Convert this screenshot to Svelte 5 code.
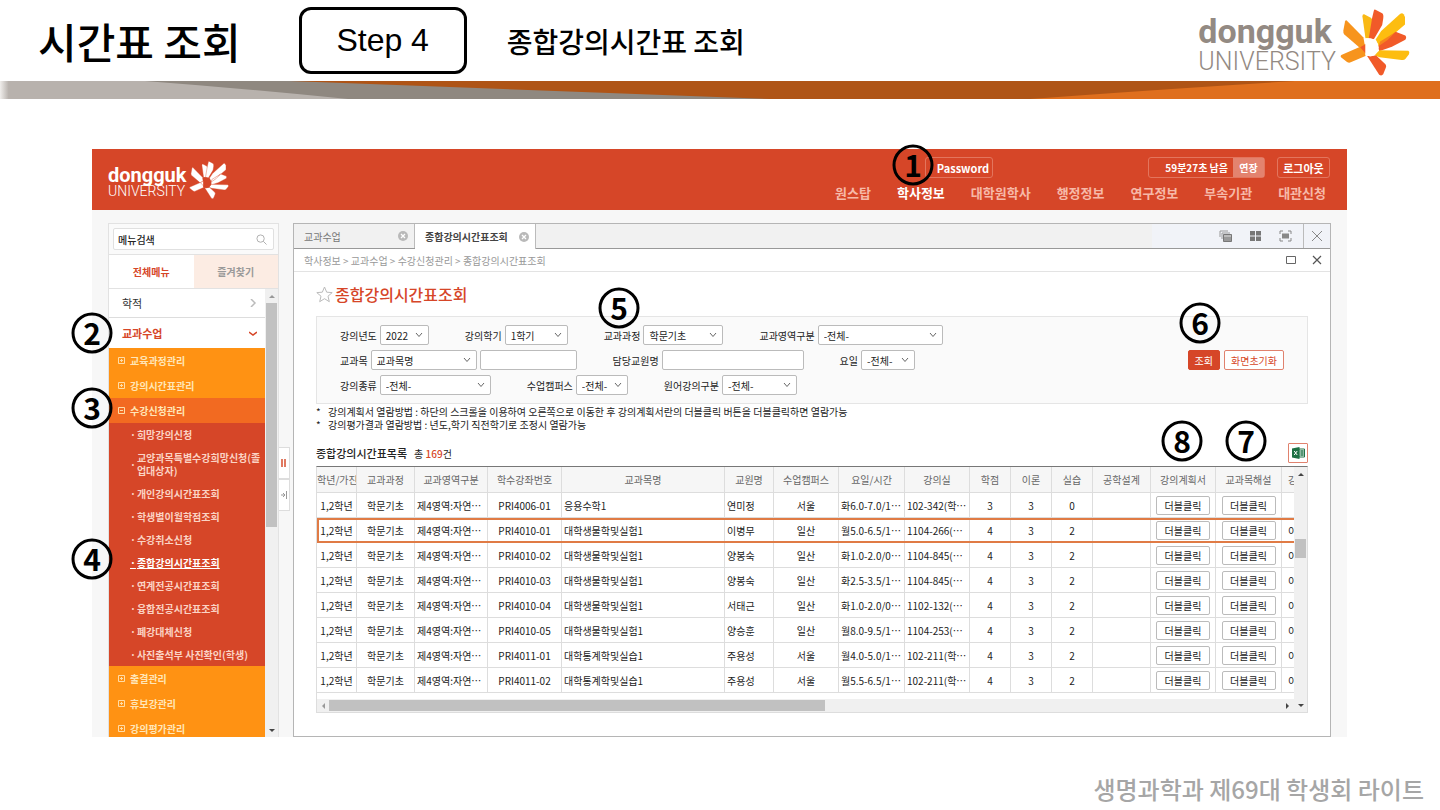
<script lang="ts">
	const nav = ['원스탑', '학사정보', '대학원학사', '행정정보', '연구정보', '부속기관', '대관신청'];

	const subMenu = [
		'희망강의신청',
		'교양과목특별수강희망신청(졸업대상자)',
		'개인강의시간표조회',
		'학생별이월학점조회',
		'수강취소신청',
		'종합강의시간표조회',
		'연계전공시간표조회',
		'융합전공시간표조회',
		'폐강대체신청',
		'사진출석부 사진확인(학생)'
	];

	const menu = [
		{ name: '교육과정관리' },
		{ name: '강의시간표관리' },
		{ name: '수강신청관리', items: subMenu },
		{ name: '출결관리' },
		{ name: '휴보강관리' },
		{ name: '강의평가관리' }
	];

	const filters = [
		[
			{ label: '강의년도', value: '2022', width: 49 },
			{ label: '강의학기', value: '1학기', width: 63 },
			{ label: '교과과정', value: '학문기초', width: 80 },
			{ label: '교과영역구분', value: '-전체-', width: 125 }
		],
		[
			{ label: '교과목', value: '교과목명', width: 106, extra: 97 },
			{ label: '담당교원명', width: 142 },
			{ label: '요일', value: '-전체-', width: 54 }
		],
		[
			{ label: '강의종류', value: '-전체-', width: 111 },
			{ label: '수업캠퍼스', value: '-전체-', width: 52 },
			{ label: '원어강의구분', value: '-전체-', width: 75 }
		]
	];

	const columns = [
		{ name: '학년/가진', width: 40 },
		{ name: '교과과정', width: 58 },
		{ name: '교과영역구분', width: 73 },
		{ name: '학수강좌번호', width: 74 },
		{ name: '교과목명' },
		{ name: '교원명', width: 49 },
		{ name: '수업캠퍼스', width: 65 },
		{ name: '요일/시간', width: 66 },
		{ name: '강의실', width: 65 },
		{ name: '학점', width: 41 },
		{ name: '이론', width: 41 },
		{ name: '실습', width: 41 },
		{ name: '공학설계', width: 58 },
		{ name: '강의계획서', width: 65 },
		{ name: '교과목해설', width: 66 },
		{ name: '강의', width: 42 }
	];

	const rows = [
		['PRI4006-01', '응용수학1', '연미정', '서울', '화6.0-7.0/1⋯', '102-342(학⋯', 3, 3, 0, ''],
		['PRI4010-01', '대학생물학및실험1', '이병무', '일산', '월5.0-6.5/1⋯', '1104-266(⋯', 4, 3, 2, '이론'],
		['PRI4010-02', '대학생물학및실험1', '양봉숙', '일산', '화1.0-2.0/0⋯', '1104-845(⋯', 4, 3, 2, '이론'],
		['PRI4010-03', '대학생물학및실험1', '양봉숙', '일산', '화2.5-3.5/1⋯', '1104-845(⋯', 4, 3, 2, '이론'],
		['PRI4010-04', '대학생물학및실험1', '서태근', '일산', '화1.0-2.0/0⋯', '1102-132(⋯', 4, 3, 2, '이론'],
		['PRI4010-05', '대학생물학및실험1', '양승훈', '일산', '월8.0-9.5/1⋯', '1104-253(⋯', 4, 3, 2, '이론'],
		['PRI4011-01', '대학통계학및실습1', '주용성', '서울', '월4.0-5.0/1⋯', '102-211(학⋯', 4, 3, 2, '이론'],
		['PRI4011-02', '대학통계학및실습1', '주용성', '서울', '월5.5-6.5/1⋯', '102-211(학⋯', 4, 3, 2, '이론']
	];

	// callouts over the window, centre points from its top left corner
	const marks = [
		{ n: 1, x: 821, y: 16 },
		{ n: 2, x: 0, y: 184 },
		{ n: 3, x: 0, y: 259 },
		{ n: 4, x: 0, y: 410 },
		{ n: 5, x: 527, y: 159 },
		{ n: 6, x: 1108, y: 174 },
		{ n: 8, x: 1090, y: 292 },
		{ n: 7, x: 1154, y: 292 }
	];

	let selected = $state(1);
</script>

{#snippet logo(mono: boolean)}
	<div class="logo" class:logo--mono={mono}>
		<div class="logo__text">
			<span class="logo__name">dongguk</span>
			<span class="logo__sub">UNIVERSITY</span>
		</div>
		<svg class="logo__flower" viewBox="602 26 209 200" aria-hidden="true">
			<path fill="#f7941d" d="M622 60 672 111 677 140 660 141 615 102Q611 98 612 90L617 63Q619 58 622 60Z" />
			<path fill="#f9b915" d="M674 42 694 52Q701 56 702 68L694 113H678L669 48Q669 41 674 42Z" />
			<path fill="#f15a29" d="M708 28 728 39Q733 43 731 55L728 74 703 116 688 113 698 52 703 31Q704 26 708 28Z" />
			<path fill="#fdbd10" d="M782 40Q788 36 792 42L796 50V72L770 95 716 138 709 116 725 92Z" />
			<path fill="#f15a29" d="M768 94 797 105Q802 110 797 118L757 139 719 152 716 136Z" />
			<path fill="#f7841d" d="M766 96 745 118 716 138 722 123Z" />
			<path fill="#fdbd10" d="M720 149 806 151Q811 153 808 161L797 175Q794 179 786 178L720 170 705 164Z" />
			<path fill="#f15a29" d="M683 166 710 165 737 190Q741 194 739 201L731 221Q726 227 719 222Z" />
			<path fill="#f7941d" d="M606 163 664 138 678 130V166L634 185Q629 188 623 184L605 170Q602 166 606 163Z" />
			<path fill="#f15a29" d="M662 140 678 131V158Z" />
			<path class="logo__core" d="M678 113H692Q717 117 717 140 714 165 692 168L678 163Z" />
		</svg>
	</div>
{/snippet}

{#snippet chevron()}
	<svg class="chevron" viewBox="0 0 8 6" aria-hidden="true"><path d="M1 1 4 4.500 7 1" /></svg>
{/snippet}

{#snippet circleClose()}
	<svg class="tab__close" viewBox="0 0 10 10" aria-hidden="true">
		<circle cx="5" cy="5" r="5" fill="#b9b9b9" />
		<path d="M3 3 7 7M7 3 3 7" stroke="#fff" stroke-width="1.300" />
	</svg>
{/snippet}

<header class="top">
	<h1>시간표 조회</h1>
	<div class="top__step">Step 4</div>
	<h2>종합강의시간표 조회</h2>
	{@render logo(false)}
</header>
<svg class="band" viewBox="0 0 1440 18" preserveAspectRatio="none" aria-hidden="true">
	<defs>
		<linearGradient id="fade" x1="0" x2="1">
			<stop offset="0" stop-color="#f0eeec" />
			<stop offset="0.006" stop-color="#b8b2ad" />
		</linearGradient>
	</defs>
	<path fill="url(#fade)" d="M0 0H1440V18H0Z" />
	<path fill="#8f8880" d="M145 0H1440V18H348Q250 8 145 0Z" />
	<path fill="#af5416" d="M290 0H1440V18H770Z" />
	<path fill="#df6f1e" d="M1295 0H1440V18H1030Q1150 9 1295 0Z" />
</svg>

<main>
	<div class="window">
		<header class="bar">
			{@render logo(true)}
			<div class="bar__right">
				<div class="bar__user">
					<button class="bar__password">Password</button>
					<div class="bar__timer"><span>59분27초 남음</span><button>연장</button></div>
					<button class="bar__logout">로그아웃</button>
				</div>
				<nav>
					{#each nav as item}
						<a href="#top" class:active={item === '학사정보'}>{item}</a>
					{/each}
				</nav>
			</div>
		</header>

		<div class="body">
			<aside>
				<div class="search">
					<input type="text" value="메뉴검색" aria-label="메뉴검색" />
					<svg viewBox="0 0 12 12" aria-hidden="true"><circle cx="5" cy="5" r="4" /><path d="M8 8 11.500 11.500" /></svg>
				</div>
				<div class="switch">
					<button class="active">전체메뉴</button>
					<button>즐겨찾기</button>
				</div>
				<div class="menu">
					<div class="menu__list">
						<a class="menu__top" href="#a">학적 <svg viewBox="0 0 8 8" aria-hidden="true"><path d="M2 0 6 4 2 8" /></svg></a>
						<a class="menu__top menu__top--open" href="#b">교과수업 <svg viewBox="0 0 8 8" aria-hidden="true"><path d="M0 3 4 6 8 3" /></svg></a>
						{#each menu as group}
							<a class="menu__group" class:open={group.items} href="#c">
								<svg viewBox="0 0 7 7" aria-hidden="true">
									<path d="M0.500 0.500H6.500V6.500H0.500Z" />
									<path d={group.items ? 'M2 3.500H5' : 'M2 3.500H5M3.500 2V5'} />
								</svg>
								{group.name}
							</a>
							{#if group.items}
								<ul>
									{#each group.items as item}
										<li><a href="#d" class:current={item === '종합강의시간표조회'}><i>·</i><span>{item}</span></a></li>
									{/each}
								</ul>
							{/if}
						{/each}
					</div>
					<div class="vscroll">
						<i class="arrow arrow--up dim"></i>
						<div class="menu__thumb"></div>
						<i class="arrow arrow--down"></i>
					</div>
				</div>
			</aside>

			<div class="handle">
				<button aria-label="메뉴 고정"><svg viewBox="0 0 6 8"><path d="M1 0V8M4 0V8" stroke="#e07a62" stroke-width="2" /></svg></button>
				<button aria-label="메뉴 접기"><svg viewBox="0 0 6 8"><path d="M0 4H4M2 2 4 4 2 6M5.500 0V8" fill="none" stroke="#999" /></svg></button>
			</div>

			<section class="panel">
				<div class="tabs">
					<button class="tab">교과수업 {@render circleClose()}</button>
					<button class="tab tab--active">종합강의시간표조회 {@render circleClose()}</button>
					<div class="tools">
						<svg viewBox="0 0 13 12" aria-hidden="true"><path d="M1 7V1H9M3 9V3H11" fill="none" stroke="#999" /><path d="M4.500 4.500H12.500V11.500H4.500Z" fill="#999" stroke="#777" /><path d="M5 6H12" stroke="#ddd" /></svg>
						<svg viewBox="0 0 13 12" aria-hidden="true"><path d="M1 1H6V5.500H1ZM7 1H12V5.500H7ZM1 6.500H6V11H1ZM7 6.500H12V11H7Z" fill="#777" /></svg>
						<svg viewBox="0 0 13 12" aria-hidden="true"><path d="M3 3.500H10V8.500H3Z" fill="#888" /><path d="M1 4V1H4M9 1H12V4M12 8V11H9M4 11H1V8" fill="none" stroke="#888" /></svg>
					</div>
					<button class="tabs__close" aria-label="모두 닫기"><svg viewBox="0 0 12 12"><path d="M1 1 11 11M11 1 1 11" stroke="#888" /></svg></button>
				</div>
				<div class="crumbs">
					<span>학사정보 &gt; 교과수업 &gt; 수강신청관리 &gt; 종합강의시간표조회</span>
					<button aria-label="최대화"><svg viewBox="0 0 10 10"><path d="M0.500 1.500H9.500V8.500H0.500Z" fill="none" stroke="#666" /></svg></button>
					<button aria-label="닫기"><svg viewBox="0 0 10 10"><path d="M1 1 9 9M9 1 1 9" stroke="#555" stroke-width="1.200" /></svg></button>
				</div>

				<div class="content">
					<h3>
						<svg viewBox="0 0 17 17" aria-hidden="true"><path d="M8.500 1 10.700 6.200 16.200 6.600 12 10.200 13.300 15.700 8.500 12.700 3.700 15.700 5 10.200 0.800 6.600 6.300 6.200Z" /></svg>
						종합강의시간표조회
					</h3>

					<form class="filter" onsubmit={(e) => e.preventDefault()}>
						<div class="filter__rows">
							{#each filters as line}
								<div class="filter__row">
									{#each line as field}
										<div class="field">
											<label for={field.label}>{field.label}</label>
											{#if field.value}
												<span class="select" style="width: {field.width}px">
													<select id={field.label}><option>{field.value}</option></select>
													{@render chevron()}
												</span>
											{:else}
												<input id={field.label} type="text" style="width: {field.width}px" />
											{/if}
											{#if field.extra}
												<input type="text" aria-label="교과목 검색어" style="width: {field.extra}px" />
											{/if}
										</div>
									{/each}
								</div>
							{/each}
						</div>
						<div class="filter__buttons">
							<button class="primary">조회</button>
							<button type="reset">화면초기화</button>
						</div>
					</form>

					<ul class="notes">
						<li><i>*</i>강의계획서 열람방법 : 하단의 스크롤을 이용하여 오른쪽으로 이동한 후 강의계획서란의 더블클릭 버튼을 더블클릭하면 열람가능</li>
						<li><i>*</i>강의평가결과 열람방법 : 년도,학기 직전학기로 조정시 열람가능</li>
					</ul>

					<div class="list-head">
						<h4>종합강의시간표목록</h4>
						<span>총 <b>169</b>건</span>
						<button aria-label="엑셀 다운로드">
							<svg viewBox="0 0 13 12"><path d="M7 2H12.500V10H7Z" fill="#fff" stroke="#217346" /><path d="M8 4H12M8 6H12M8 8H12M10 3V9" stroke="#217346" /><path d="M0 1.500 7.500 0V12L0 10.500Z" fill="#1d7044" /><path d="M2.200 4 5.200 8M5.200 4 2.200 8" stroke="#fff" /></svg>
						</button>
					</div>

					<div class="grid">
						<div class="grid__main">
							<table>
								<colgroup>
									{#each columns as col}
										<col style={col.width ? `width: ${col.width}px` : ''} />
									{/each}
								</colgroup>
								<thead>
									<tr>
										{#each columns as col}<th>{col.name}</th>{/each}
									</tr>
								</thead>
								<tbody>
									{#each rows as row, i}
										<tr class:selected={selected === i} onclick={() => (selected = i)}>
											<td>1,2학년</td>
											<td>학문기초</td>
											<td class="left">제4영역:자연⋯</td>
											<td>{row[0]}</td>
											<td class="left">{row[1]}</td>
											<td class="left">{row[2]}</td>
											<td>{row[3]}</td>
											<td class="left">{row[4]}</td>
											<td class="left">{row[5]}</td>
											<td>{row[6]}</td>
											<td>{row[7]}</td>
											<td>{row[8]}</td>
											<td></td>
											<td><button>더블클릭</button></td>
											<td><button>더블클릭</button></td>
											<td>{row[9]}</td>
										</tr>
									{/each}
								</tbody>
							</table>
							<div class="hscroll">
								<i class="arrow arrow--left dim"></i>
								<div class="hscroll__track"><div class="hscroll__thumb"></div></div>
								<i class="arrow arrow--right"></i>
							</div>
						</div>
						<div class="vscroll">
							<i class="arrow arrow--up"></i>
							<div class="grid__thumb"></div>
							<i class="arrow arrow--down"></i>
						</div>
					</div>
				</div>
			</section>
		</div>

		{#each marks as mark}
			<span class="mark" style="left: {mark.x}px; top: {mark.y}px">{mark.n}</span>
		{/each}
	</div>
</main>

<footer>생명과학과 제69대 학생회 라이트</footer>

<style>
	:global(body) {
		background: #fff;
		font-family: "Noto Sans CJK KR", "Noto Sans", sans-serif;
		font-size: 10px;
		color: #333;
	}
	h1, h2, h3, h4, ul {
		margin: 0;
		padding: 0;
		list-style: none;
	}
	a {
		color: inherit;
		text-decoration: none;
	}
	i {
		font-style: normal;
	}
	button, input, select {
		box-sizing: border-box;
		margin: 0;
		padding: 0;
		border: none;
		border-radius: 0;
		background: none;
		font: inherit;
		color: inherit;
	}
	button {
		cursor: pointer;
	}
	svg {
		display: block;
		flex: none;
	}

	.top {
		display: flex;
		align-items: center;
		height: 81px;
		padding: 0 30px 0 38px;
		color: #000;
	}
	.top h1 {
		font-size: 42px;
		line-height: 60px;
		font-weight: 500;
	}
	.top__step {
		box-sizing: border-box;
		width: 168px;
		margin: 0 40px 0 58px;
		border: 3px solid #000;
		border-radius: 12px;
		font-family: "Liberation Sans", sans-serif;
		font-size: 32px;
		line-height: 61px;
		text-align: center;
	}
	.top h2 {
		font-size: 28px;
		line-height: 40px;
		font-weight: 500;
	}
	.band {
		width: 100%;
		height: 18px;
	}

	.logo {
		display: flex;
		align-items: center;
		gap: 4px;
		margin-left: auto;
		padding-top: 3px;
		font-family: Roboto, sans-serif;
		color: #938a83;
	}
	.logo__text {
		display: flex;
		flex-direction: column;
		padding-top: 4px;
	}
	.logo__name {
		font-size: 34px;
		line-height: 36px;
		font-weight: 700;
	}
	.logo__sub {
		font-size: 25px;
		line-height: 26px;
		font-weight: 300;
	}
	.logo__flower {
		width: 70px;
		height: 67px;
	}
	.logo__core {
		fill: #fff;
	}
	.logo--mono {
		gap: 2px;
		margin: 0;
		padding: 0;
		color: #fff;
	}
	.logo--mono .logo__name {
		font-size: 20px;
		line-height: 18px;
	}
	.logo--mono .logo__sub {
		font-size: 14px;
		line-height: 15px;
	}
	.logo--mono .logo__flower {
		width: 40px;
		height: 38px;
	}
	.logo--mono path {
		fill: #fff;
		stroke: #d64628;
		stroke-width: 2;
	}
	.logo--mono .logo__core {
		fill: #d64628;
	}

	main {
		padding: 50px 93px 0 92px;
	}
	.window {
		position: relative;
		background: #f7f7f7;
	}
	.bar {
		box-sizing: border-box;
		display: flex;
		justify-content: space-between;
		align-items: center;
		height: 61px;
		padding: 1px 17px 0 16px;
		background: #d64628;
		color: #fff;
	}
	.bar__right {
		display: flex;
		flex-direction: column;
		gap: 5px;
	}
	.bar__user {
		display: flex;
		justify-content: flex-end;
		font-weight: 700;
		font-size: 11px;
	}
	.bar__user > * {
		height: 21px;
		border: 1px solid #e3755d;
		border-radius: 3px;
	}
	.bar__password {
		width: 68px;
		padding-left: 8px;
		margin-right: 155px;
	}
	.bar__timer {
		box-sizing: border-box;
		display: flex;
		align-items: center;
		justify-content: flex-end;
		width: 117px;
		margin-right: 12px;
		font-size: 10px;
	}
	.bar__timer button {
		width: 31px;
		height: 19px;
		margin-left: 5px;
		background: #e3836f;
	}
	.bar__logout {
		width: 53px;
	}
	nav {
		display: flex;
		gap: 26px;
		justify-content: flex-end;
		padding-right: 4px;
		font-size: 13px;
		line-height: 20px;
		font-weight: 700;
		color: #f6b9a8;
	}
	nav .active {
		color: #fff;
	}

	.body {
		display: grid;
		grid-template-columns: 171px 14px minmax(0, 1fr);
		padding: 13px 16px 0;
	}
	aside {
		display: flex;
		flex-direction: column;
		box-sizing: border-box;
		border: 1px solid #e2e2e2;
		border-bottom: none;
		background: #fafafa;
	}
	.search {
		display: flex;
		align-items: center;
		margin: 4px;
		height: 20px;
		padding: 0 6px 0 4px;
		border: 1px solid #e0e0e0;
		border-radius: 2px;
		background: #fff;
	}
	.search input {
		flex: 1;
		min-width: 0;
		font-weight: 500;
		color: #222;
	}
	.search svg {
		width: 11px;
		height: 11px;
		fill: none;
		stroke: #aaa;
	}
	.switch {
		display: grid;
		grid-template-columns: 1fr 1fr;
		height: 33px;
		border-top: 1px solid #e2e2e2;
		border-bottom: 1px solid #e2e2e2;
	}
	.switch button {
		background: #fcece3;
		font-weight: 700;
		color: #999;
	}
	.switch .active {
		background: #fff;
		color: #d64628;
	}
	.menu {
		display: flex;
		flex: 1 1 0;
		height: 0;
		overflow: hidden;
	}
	.menu__list {
		flex: 1;
	}
	.menu__top {
		display: flex;
		align-items: center;
		justify-content: space-between;
		height: 28px;
		padding: 0 8px 0 13px;
		border-bottom: 1px solid #ddd;
		background: #fff;
		font-size: 11px;
	}
	.menu__top svg {
		width: 8px;
		height: 8px;
		fill: none;
		stroke: #bbb;
		stroke-width: 1.5;
	}
	.menu__top--open {
		height: 30px;
		border: none;
		font-weight: 700;
		color: #d64628;
	}
	.menu__top--open svg {
		stroke: #d64628;
	}
	.menu__group {
		display: flex;
		align-items: center;
		gap: 5px;
		height: 25px;
		padding-left: 9px;
		background: #ff9213;
		font-weight: 700;
		color: #ffe6b8;
	}
	.menu__group.open {
		background: #f26a21;
	}
	.menu__group svg {
		width: 7px;
		height: 7px;
		fill: none;
		stroke: #ffdca6;
	}
	.menu ul {
		background: #d64628;
		font-weight: 700;
		color: #fbd3c4;
	}
	.menu li {
		display: flex;
		padding: 5px 4px 5px 21px;
		line-height: 13px;
		word-break: break-all;
	}
	.menu li a {
		display: flex;
		align-items: center;
		gap: 1px;
	}
	.menu li .current {
		color: #fff;
		text-decoration: underline;
	}

	.vscroll {
		display: flex;
		flex-direction: column;
		align-items: center;
		width: 13px;
		background: #f0f0f0;
	}
	.arrow {
		width: 0;
		height: 0;
		border: 3px solid transparent;
		color: #444;
	}
	.dim {
		color: #999;
	}
	.arrow--up {
		margin: 3px 0 5px;
		border-bottom-color: currentColor;
	}
	.arrow--down {
		margin: auto 0 2px;
		border-top-color: currentColor;
	}
	.arrow--left {
		margin: 0 4px 0 2px;
		border-right-color: currentColor;
	}
	.arrow--right {
		margin: 0 2px 0 4px;
		border-left-color: currentColor;
	}
	.menu__thumb {
		width: 11px;
		height: 224px;
		background: #c1c1c1;
	}

	.handle {
		padding-top: 224px;
	}
	.handle button {
		display: flex;
		align-items: center;
		justify-content: center;
		width: 11px;
		height: 32px;
		border: 1px solid #ddd;
		border-left: none;
		background: #fff;
	}
	.handle svg {
		width: 6px;
		height: 8px;
	}

	.panel {
		border: 1px solid #b5b5b5;
		background: #fff;
	}
	.tabs {
		display: flex;
		height: 24px;
		border-bottom: 1px solid #999;
		background: #f1f1f1;
	}
	.tab {
		display: flex;
		align-items: center;
		justify-content: space-between;
		width: 121px;
		padding: 0 6px 0 10px;
		border-right: 1px solid #bbb;
		color: #777;
	}
	.tab--active {
		height: 25px;
		background: #fff;
		font-weight: 700;
		color: #444;
	}
	.tab__close {
		width: 10px;
		height: 10px;
	}
	.tools {
		display: flex;
		align-items: center;
		gap: 17px;
		margin-left: auto;
		padding: 0 11px 0 67px;
		background: #f1f3f8;
	}
	.tools svg {
		width: 13px;
		height: 12px;
	}
	.tabs__close {
		width: 27px;
		padding: 0 7px;
		border-left: 1px solid #bbb;
		background: #f1f3f8;
	}
	.crumbs {
		display: flex;
		align-items: center;
		gap: 16px;
		height: 22px;
		padding: 0 8px 0 10px;
		border-bottom: 1px solid #e3e3e3;
		color: #999;
	}
	.crumbs span {
		flex: 1;
	}
	.crumbs svg {
		width: 10px;
		height: 10px;
	}
	.content {
		padding: 0 22px 23px;
	}
	h3 {
		display: flex;
		align-items: center;
		gap: 2px;
		height: 44px;
		font-size: 16px;
		font-weight: 500;
		color: #d64628;
	}
	h3 svg {
		width: 17px;
		height: 17px;
		fill: #fff;
		stroke: #bbb;
	}

	.filter {
		display: flex;
		justify-content: space-between;
		align-items: center;
		padding: 8px 23px;
		border: 1px solid #e5e5e5;
		background: #fafafa;
	}
	.filter__rows {
		display: flex;
		flex-direction: column;
		gap: 5px;
	}
	.filter__row {
		display: flex;
		gap: 36px;
	}
	.field {
		display: flex;
		align-items: center;
		gap: 3px;
		color: #222;
	}
	.field input, .select {
		box-sizing: border-box;
		height: 20px;
		border: 1px solid #bbb;
		border-radius: 2px;
		background: #fff;
	}
	.select {
		display: grid;
		align-items: center;
	}
	.select > :global(*) {
		grid-area: 1 / 1;
	}
	.select select {
		width: 100%;
		height: 18px;
		padding-left: 5px;
		appearance: none;
	}
	.chevron {
		justify-self: end;
		width: 8px;
		height: 6px;
		margin-right: 5px;
		fill: none;
		stroke: #666;
		pointer-events: none;
	}
	.filter__buttons {
		display: flex;
		gap: 4px;
	}
	.filter__buttons button {
		height: 20px;
		padding: 0 6px;
		border: 1px solid #e0826e;
		border-radius: 2px;
		background: #fff;
		color: #d64628;
	}
	.filter__buttons .primary {
		border-color: #d64628;
		background: #d64628;
		color: #fff;
	}
	.notes {
		padding-top: 1px;
		line-height: 13px;
		color: #222;
	}
	.notes li {
		display: flex;
	}
	.notes i {
		width: 12px;
	}
	.list-head {
		display: flex;
		align-items: center;
		gap: 7px;
		height: 20px;
		margin: 12px 0 3px;
		color: #222;
	}
	.list-head h4 {
		font-size: 11px;
		font-weight: 500;
	}
	.list-head b {
		font-weight: 500;
		color: #d64628;
	}
	.list-head button {
		display: flex;
		align-items: center;
		justify-content: center;
		width: 20px;
		height: 20px;
		margin-left: auto;
		border: 1px solid #e0826e;
		border-radius: 1px;
	}
	.list-head svg {
		width: 13px;
		height: 12px;
	}

	.grid {
		display: flex;
		border: 1px solid #ddd;
		border-top-color: #777;
	}
	.grid__main {
		flex: 1;
		min-width: 0;
		overflow: hidden;
	}
	/* the last column runs on under the scrollbar */
	table {
		table-layout: fixed;
		width: calc(100% + 30px);
		border-spacing: 0;
	}
	th, td {
		box-sizing: border-box;
		height: 25px;
		padding: 0;
		border-right: 1px solid #ddd;
		border-bottom: 1px solid #ddd;
		text-align: center;
		white-space: nowrap;
		overflow: hidden;
		color: #222;
	}
	th {
		height: 26px;
		background: #f6f6f6;
		font-weight: 400;
		color: #666;
	}
	th:last-child, td:last-child {
		padding-left: 6px;
		text-align: left;
	}
	td.left {
		padding-left: 2px;
		text-align: left;
	}
	.selected {
		outline: 2px solid #e07b45;
		outline-offset: -2px;
	}
	td button {
		width: 54px;
		height: 19px;
		border: 1px solid #bbb;
		border-radius: 2px;
		background: #fff;
	}
	.hscroll {
		display: flex;
		align-items: center;
		height: 13px;
		margin-top: 6px;
		background: #f0f0f0;
	}
	.hscroll__track {
		flex: 1;
	}
	.hscroll__thumb {
		width: 52%;
		height: 11px;
		background: #c1c1c1;
	}
	.grid__thumb {
		width: 11px;
		height: 19px;
		margin-top: 58px;
		background: #c1c1c1;
	}

	.mark {
		position: absolute;
		box-sizing: border-box;
		width: 41px;
		height: 41px;
		border: 3px solid #000;
		border-radius: 50%;
		transform: translate(-50%, -50%);
		font-size: 30px;
		line-height: 33px;
		font-weight: 700;
		text-align: center;
		color: #000;
	}

	footer {
		padding: 34px 16px 0;
		font-size: 24px;
		line-height: 36px;
		font-weight: 500;
		text-align: right;
		color: #a6a6a6;
	}
</style>
